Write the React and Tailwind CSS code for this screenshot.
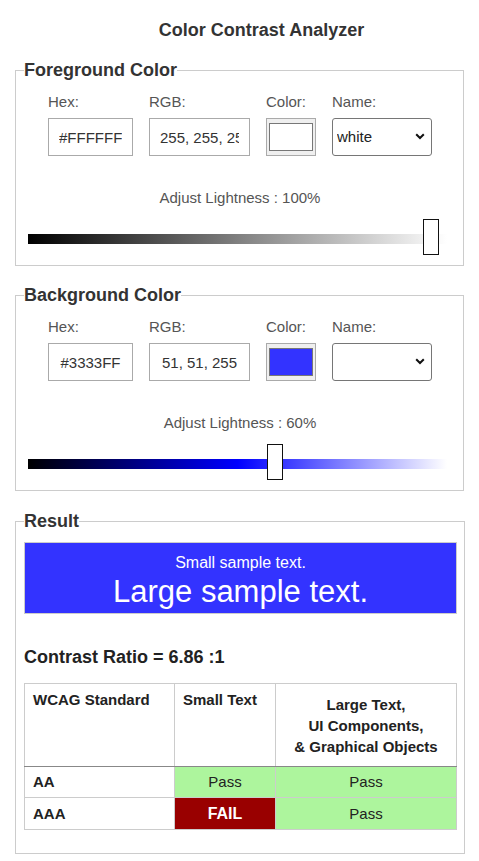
const font = { fontFamily: '"Liberation Sans", Arial, sans-serif' };

const Swatch = ({ color }) => (
    <div className="w-[50px] h-[38px] border border-[#aaa] bg-[#efefef] px-[2px] pt-[4px] pb-[4px]">
        <div className="w-full h-full border border-[#777]" style={{ background: color }} />
    </div>
);

const NameSelect = ({ value }) => (
    <div className="relative w-[100px] h-[38px]">
        <select
            value={value}
            onChange={() => {}}
            className="appearance-none w-full h-full border border-[#767676] rounded-[3px] bg-white pl-[4px] text-[15px] text-[#222] outline-none"
        >
            <option value="">{""}</option>
            <option value="white">white</option>
        </select>
        <svg className="absolute right-[7px] top-[15px] pointer-events-none" width="10" height="7" viewBox="0 0 10 7">
            <path d="M1.2 1.2 L5 5 L8.8 1.2" fill="none" stroke="#111" strokeWidth="2" />
        </svg>
    </div>
);

const ColorSection = ({ title, hex, rgb, swatch, name, lightness, track, thumbLeft }) => (
    <fieldset className="border border-[#ccc] pl-[8px] pr-[7px] pb-[10px] mx-[15px] mt-[19px]">
        <legend className="text-[18px] leading-[21px] font-bold text-[#333]">{title}</legend>
        <div className="flex gap-[16px] ml-[24px] pt-[12px]">
            <div className="flex flex-col gap-[8px]">
                <span className="text-[15px] leading-[17px] text-[#555]">Hex:</span>
                <input readOnly value={hex} className="w-[85px] h-[38px] border border-[#aaa] px-[10px] text-center text-[15px] text-[#333] outline-none" />
            </div>
            <div className="flex flex-col gap-[8px]">
                <span className="text-[15px] leading-[17px] text-[#555]">RGB:</span>
                <input readOnly value={rgb} className="w-[101px] h-[38px] border border-[#aaa] px-[10px] text-center text-[15px] text-[#333] outline-none" />
            </div>
            <div className="flex flex-col gap-[8px]">
                <span className="text-[15px] leading-[17px] text-[#555]">Color:</span>
                <Swatch color={swatch} />
            </div>
            <div className="flex flex-col gap-[8px]">
                <span className="text-[15px] leading-[17px] text-[#555]">Name:</span>
                <NameSelect value={name} />
            </div>
        </div>
        <p className="mt-[33px] text-center text-[15px] leading-[18px] text-[#555]">Adjust Lightness : {lightness}</p>
        <div className="relative h-[36px] mt-[12px]">
            <div className="absolute left-[4px] top-[15px] w-[419px] h-[10px]" style={{ background: track }} />
            <div className={`absolute top-0 w-[16px] h-[36px] bg-white border-[1.5px] border-[#111] ${thumbLeft}`} />
        </div>
    </fieldset>
);

const th = "border border-[#ccc] border-b-[#888] text-[15px] leading-[21px] font-bold text-[#222]";
const td = "border border-[#ccc] h-[31px] text-[15px] leading-[18px] text-[#222]";

export default function App() {
    return (
        <div className="w-[479px] bg-white pt-[20px] pb-[8px]" style={font}>
            <h1 className="pl-[44px] text-center text-[18px] leading-[21px] font-bold text-[#333]">Color Contrast Analyzer</h1>

            <div className="mt-[4px]">
                <ColorSection
                    title="Foreground Color"
                    hex="#FFFFFF"
                    rgb="255, 255, 255"
                    swatch="#ffffff"
                    name="white"
                    lightness="100%"
                    track="linear-gradient(to right, #000 0%, #fff 100%)"
                    thumbLeft="left-[399px]"
                />
            </div>

            <ColorSection
                title="Background Color"
                hex="#3333FF"
                rgb="51, 51, 255"
                swatch="#3333ff"
                name=""
                lightness="60%"
                track="linear-gradient(to right, #000 0%, #0000ff 50%, #fff 100%)"
                thumbLeft="left-[243px]"
            />

            <fieldset className="border border-[#ccc] pl-[8px] pr-[7px] pb-[23px] mx-[15px] mt-[20px]">
                <legend className="text-[18px] leading-[21px] font-bold text-[#333]">Result</legend>
                <div className="mt-[10px] h-[72px] bg-[#3333ff] border border-[#ccc] text-white text-center pt-[10px]">
                    <p className="text-[16px] leading-[20px]">Small sample text.</p>
                    <p className="text-[31px] leading-[38px]">Large sample text.</p>
                </div>

                <p className="mt-[33px] text-[18px] leading-[21px] font-bold text-[#222]">Contrast Ratio = 6.86 :1</p>

                <table className="mt-[15px] w-[432px] table-fixed border-collapse">
                    <colgroup>
                        <col className="w-[150px]" />
                        <col className="w-[101px]" />
                        <col className="w-[181px]" />
                    </colgroup>
                    <thead>
                        <tr className="h-[83px]">
                            <th className={`${th} text-left align-top px-[8px] pt-[5px]`}>WCAG Standard</th>
                            <th className={`${th} text-left align-top px-[8px] pt-[5px]`}>Small Text</th>
                            <th className={`${th} text-center align-middle px-[4px]`}>
                                Large Text,<br />UI Components,<br />&amp; Graphical Objects
                            </th>
                        </tr>
                    </thead>
                    <tbody>
                        <tr>
                            <td className={`${td} font-bold px-[8px]`}>AA</td>
                            <td className={`${td} text-center bg-[#adf59d]`}>Pass</td>
                            <td className={`${td} text-center bg-[#adf59d]`}>Pass</td>
                        </tr>
                        <tr>
                            <td className={`${td} font-bold px-[8px] h-[32px]`}>AAA</td>
                            <td className={`${td} text-center bg-[#990000] text-white font-bold text-[16px]`}>FAIL</td>
                            <td className={`${td} text-center bg-[#adf59d]`}>Pass</td>
                        </tr>
                    </tbody>
                </table>
            </fieldset>
        </div>
    );
}
